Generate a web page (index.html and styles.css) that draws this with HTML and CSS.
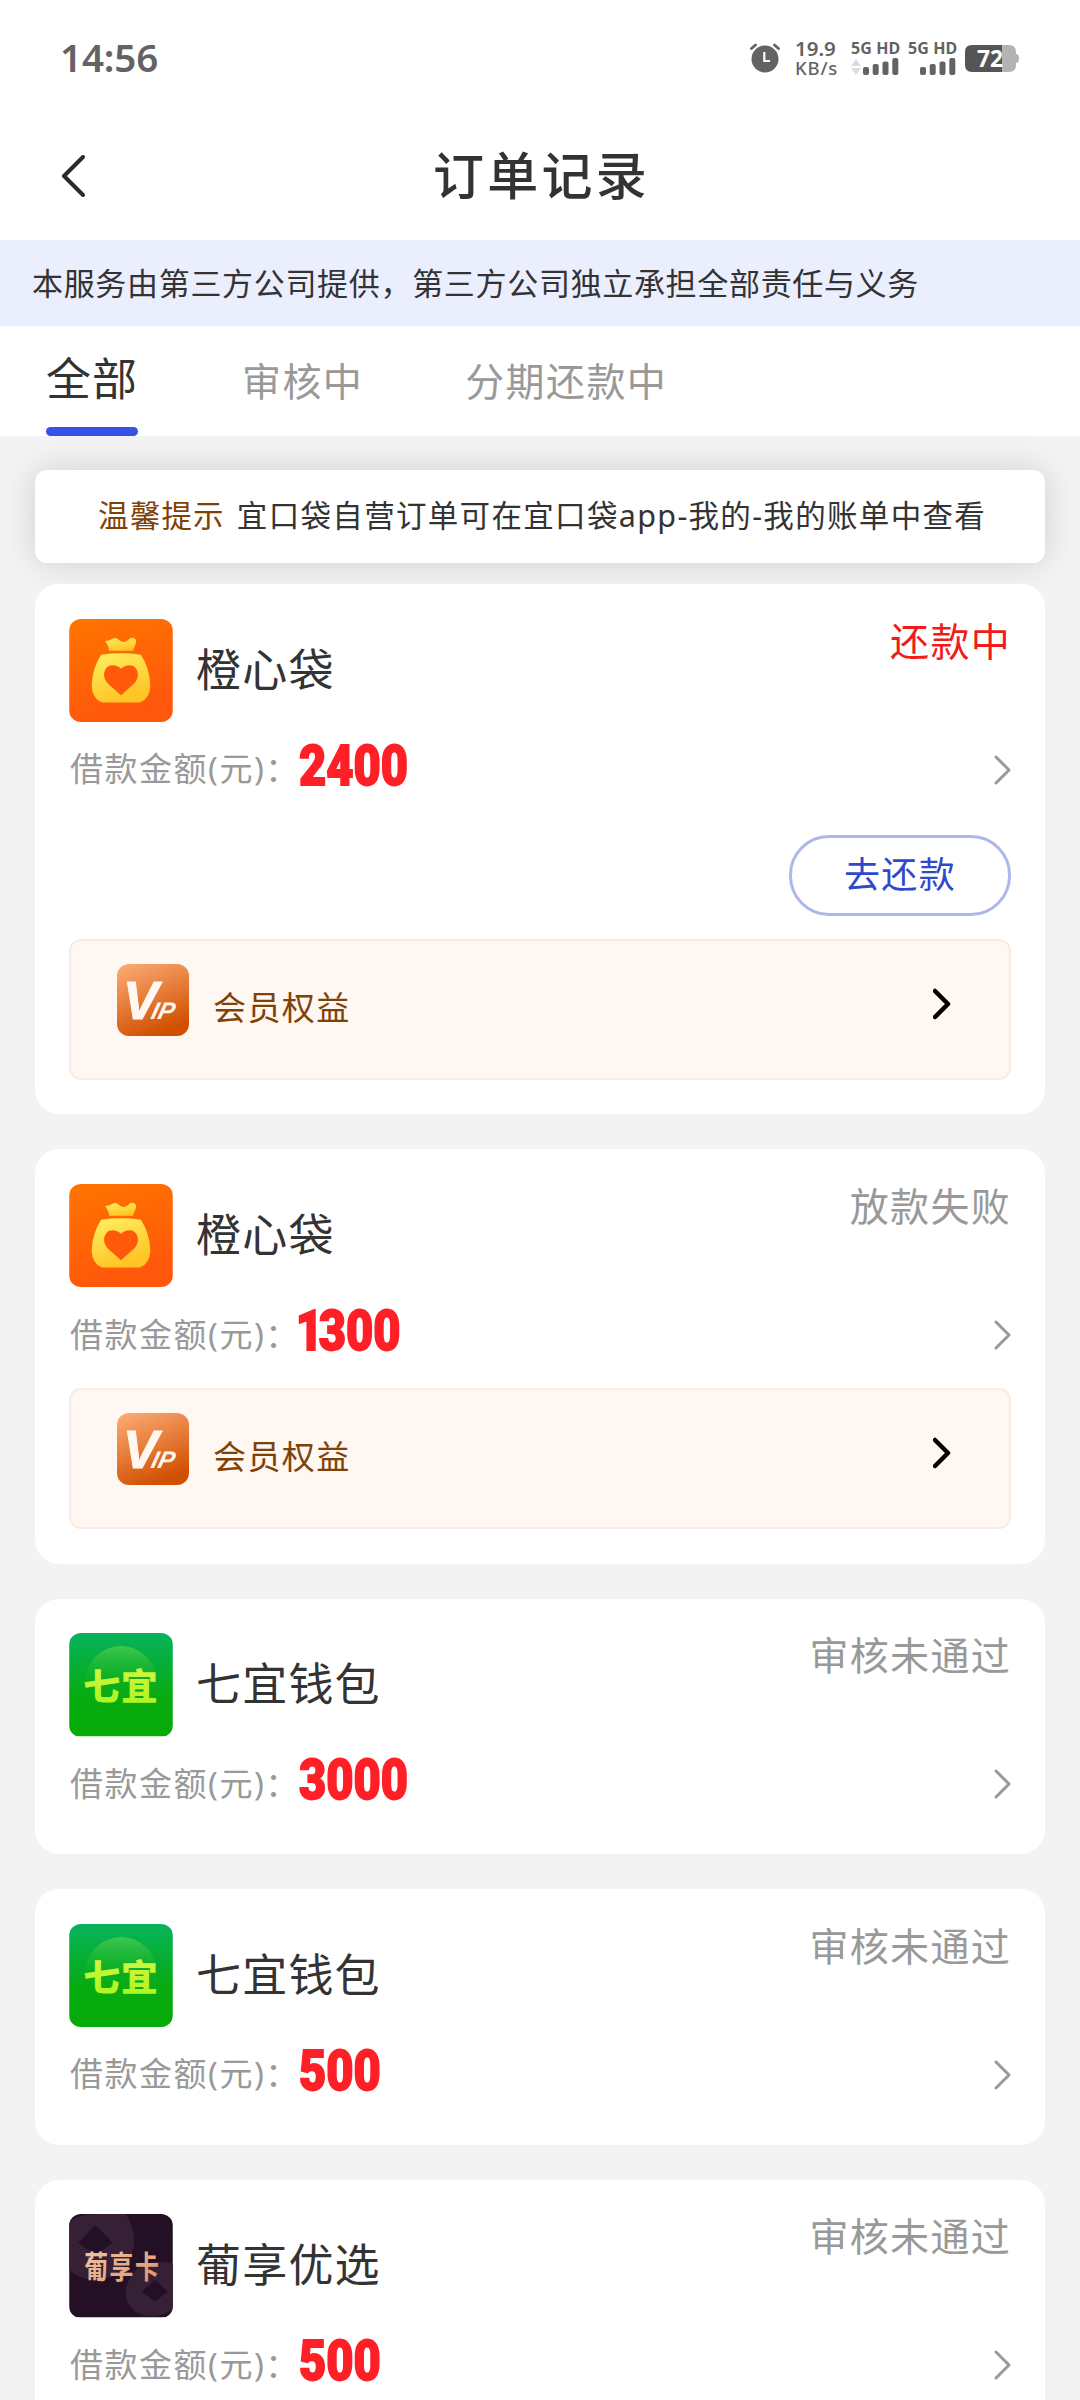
FILE: index.html
```html
<!DOCTYPE html>
<html lang="zh-CN">
<head>
<meta charset="utf-8">
<title>订单记录</title>
<link rel="stylesheet" href="styles.css">
</head>
<body>
<svg class="defs" width="0" height="0" aria-hidden="true">
  <defs>
    <linearGradient id="orange" x1="0" y1="0" x2="0.3" y2="1"><stop offset="0" stop-color="#ff7500"/><stop offset="1" stop-color="#ff570b"/></linearGradient>
    <linearGradient id="bag" x1="0" y1="0" x2="0.4" y2="1"><stop offset="0" stop-color="#fff063"/><stop offset="1" stop-color="#ffc524"/></linearGradient>
    <linearGradient id="green" x1="0" y1="0" x2="0" y2="1"><stop offset="0" stop-color="#06b35c"/><stop offset="0.6" stop-color="#07ab12"/><stop offset="1" stop-color="#07ab05"/></linearGradient>
    <linearGradient id="glow" x1="0" y1="0" x2="0" y2="1"><stop offset="0" stop-color="#3fc750"/><stop offset="0.5" stop-color="#14b020" stop-opacity="0.3"/><stop offset="1" stop-color="#07ab05" stop-opacity="0"/></linearGradient>
    <linearGradient id="lime" x1="0" y1="0" x2="0" y2="1"><stop offset="0" stop-color="#dcf64a"/><stop offset="1" stop-color="#a6f51c"/></linearGradient>
    <linearGradient id="gold" x1="0" y1="0" x2="1" y2="1"><stop offset="0" stop-color="#f3c9a8"/><stop offset="1" stop-color="#dc9468"/></linearGradient>
    <linearGradient id="copper" x1="0.1" y1="0" x2="0.5" y2="1"><stop offset="0" stop-color="#fbaa75"/><stop offset="1" stop-color="#d15000"/></linearGradient>
    <symbol id="logo-bag" viewBox="0 0 104 104">
      <rect width="104" height="104" fill="url(#orange)"/>
      <path d="M36 22 Q40 22 43 20 Q47 18 50 21 Q55 25 59 21 Q62 18 65 19 Q68 21 67 24 L64 32 H40 Q40 27 36 22Z" fill="url(#bag)"/>
      <path d="M32 36 Q52 33 72 36 Q81 50 81.500 67 Q81 80 71 84 H33 Q23 80 22.500 67 Q23 50 32 36Z" fill="url(#bag)"/>
      <path d="M52 76.500 L39 65 Q35 61 35 56 Q35 50 40 47 Q47 45 52 50 Q57 45 64 47 Q69 50 69 56 Q69 61 65 65Z" fill="#ff5a0a"/>
    </symbol>
    <symbol id="logo-qiyi" viewBox="0 0 104 104">
      <rect width="104" height="104" fill="url(#green)"/>
      <circle cx="52" cy="49" r="36" fill="url(#glow)"/>
      <text class="logo-qiyi-text" x="14" y="67" textLength="75" fill="url(#lime)">七宜</text>
    </symbol>
    <symbol id="logo-card" viewBox="0 0 104 104">
      <rect width="104" height="104" fill="#241025"/>
      <path d="M0 8 Q10 0 26 0 H57 Q70 22 62 42 Q50 67 25 67 Q10 65 0 56Z" fill="#352036"/>
      <path d="M104 50 Q82 44 68 55 Q50 75 61 93 Q73 107 94 101 L104 96Z" fill="#352036"/>
      <path d="M26 11 L44 29 L26 41 L9 29Z M86 66 L99 78 L86 88 L73 78Z" fill="#241025"/>
      <text class="logo-card-text" transform="translate(15 64) scale(1 1.3)" textLength="75" fill="url(#gold)">葡享卡</text>
    </symbol>
    <symbol id="vip" viewBox="0 0 72 72">
      <rect width="72" height="72" rx="12" fill="url(#copper)"/>
      <text class="vip-v" x="6" y="55">V</text>
      <text class="vip-ip" transform="translate(33 55) skewX(-14)">IP</text>
    </symbol>
    <symbol id="signal" viewBox="0 0 36 17">
      <g fill="#636363"><rect y="9" width="6" height="8" rx="2"/><rect x="9.7" y="6" width="6" height="11" rx="2"/><rect x="19.5" y="3.5" width="6" height="13.5" rx="2"/><rect x="29.3" width="6" height="17" rx="2"/></g>
    </symbol>
    <symbol id="arrow" viewBox="0 0 18 32"><path d="M2 3 L15 16 L2 29" fill="none" stroke="currentColor" stroke-linecap="round" stroke-linejoin="round"/></symbol>
  </defs>
</svg>

<div class="status-bar">
  <div class="clock">14:56</div>
  <div class="indicators">
    <svg class="alarm" viewBox="0 0 30 30"><circle cx="15" cy="16" r="13.5" fill="#636363"/><path d="M1.5 5.500 L5.500 2 M24.500 2 L28.500 5.500" stroke="#636363" stroke-width="2.800" stroke-linecap="round"/><path d="M14.300 9 V18 H20" fill="none" stroke="#fff" stroke-width="2.200"/></svg>
    <div class="speed"><span>19.9</span><span>KB/s</span></div>
    <div class="sim"><span>5G HD</span><div class="bars"><svg class="updown" viewBox="0 0 10 16"><path d="M5 0 L10 7 H0Z M5 16 L10 9 H0Z" fill="#dcdcdc"/></svg><svg class="signal"><use href="#signal"/></svg></div></div>
    <div class="sim sim-second"><span>5G HD</span><div class="bars"><svg class="signal"><use href="#signal"/></svg></div></div>
    <svg class="battery" viewBox="0 0 54 27"><path d="M37 0 H44 Q51 0 51 7 V9 Q54 9 54 13.500 Q54 18 51 18 V20 Q51 27 44 27 H37Z" fill="#b3b3b3"/><path d="M7 0 H37 V27 H7 Q0 27 0 20 V7 Q0 0 7 0Z" fill="#555"/><text class="battery-text" x="12" y="22" textLength="26" lengthAdjust="spacingAndGlyphs">72</text></svg>
  </div>
</div>

<header class="nav">
  <svg class="back" viewBox="0 0 24 42"><path d="M22 2 L3 21 L22 40" fill="none" stroke="#2b2b2b" stroke-width="4" stroke-linecap="round" stroke-linejoin="round"/></svg>
  <h1>订单记录</h1>
</header>

<div class="notice">本服务由第三方公司提供，第三方公司独立承担全部责任与义务</div>

<nav class="tabs">
  <div class="tab active">全部</div>
  <div class="tab">审核中</div>
  <div class="tab">分期还款中</div>
</nav>

<main>
  <div class="tip"><b>温馨提示</b><span>宜口袋自营订单可在宜口袋app-我的-我的账单中查看</span></div>

  <section class="card">
    <div class="head"><svg class="logo"><use href="#logo-bag"/></svg><h2>橙心袋</h2><span class="state repaying">还款中</span></div>
    <div class="amount"><span class="label">借款金额(元)：</span><span class="value">2400</span><svg class="more"><use href="#arrow"/></svg></div>
    <div class="actions"><button class="repay">去还款</button></div>
    <div class="member"><svg class="vip"><use href="#vip"/></svg><span>会员权益</span><svg class="go"><use href="#arrow"/></svg></div>
  </section>

  <section class="card">
    <div class="head"><svg class="logo"><use href="#logo-bag"/></svg><h2>橙心袋</h2><span class="state">放款失败</span></div>
    <div class="amount"><span class="label">借款金额(元)：</span><span class="value"><span class="one">1</span>300</span><svg class="more"><use href="#arrow"/></svg></div>
    <div class="member"><svg class="vip"><use href="#vip"/></svg><span>会员权益</span><svg class="go"><use href="#arrow"/></svg></div>
  </section>

  <section class="card">
    <div class="head"><svg class="logo"><use href="#logo-qiyi"/></svg><h2>七宜钱包</h2><span class="state">审核未通过</span></div>
    <div class="amount"><span class="label">借款金额(元)：</span><span class="value">3000</span><svg class="more"><use href="#arrow"/></svg></div>
  </section>

  <section class="card">
    <div class="head"><svg class="logo"><use href="#logo-qiyi"/></svg><h2>七宜钱包</h2><span class="state">审核未通过</span></div>
    <div class="amount"><span class="label">借款金额(元)：</span><span class="value">500</span><svg class="more"><use href="#arrow"/></svg></div>
  </section>

  <section class="card">
    <div class="head"><svg class="logo"><use href="#logo-card"/></svg><h2>葡享优选</h2><span class="state">审核未通过</span></div>
    <div class="amount"><span class="label">借款金额(元)：</span><span class="value">500</span><svg class="more"><use href="#arrow"/></svg></div>
  </section>
</main>
</body>
</html>
```
FILE: styles.css
```css
* { box-sizing: border-box; }
body {
  margin: 0;
  width: 1080px;
  height: 2400px;
  overflow: hidden;
  display: flex;
  flex-direction: column;
  background: #f3f3f3;
  color: #333;
  font-family: "Noto Sans", "Noto Sans CJK SC", sans-serif;
}
.defs { position: absolute; }
svg { flex: none; display: block; }
h1, h2 { margin: 0; font-family: "Noto Sans CJK SC", sans-serif; }

.status-bar {
  flex: none;
  height: 116px;
  padding: 0 61px 0 60px;
  display: flex;
  align-items: center;
  justify-content: space-between;
  background: #fff;
  color: #636363;
}
.clock { font-size: 38.5px; font-weight: 600; line-height: 40px; margin-bottom: 2px; letter-spacing: -0.1px; }
.indicators { display: flex; align-items: center; height: 40px; }
.alarm { width: 30px; height: 30px; margin-right: 15px; }
.speed { width: 56px; display: flex; flex-direction: column; font-size: 20.5px; font-weight: 600; }
.speed span { line-height: 20px; }
.speed span + span { font-size: 18.5px; font-weight: 500; letter-spacing: 0.8px; }
.sim { width: 57px; height: 34px; display: flex; flex-direction: column; justify-content: space-between; }
.sim span { font: 700 16px/14px "Noto Sans", sans-serif; white-space: nowrap; letter-spacing: 0.1px; }
.bars { display: flex; align-items: center; width: 48px; justify-content: space-between; }
.sim-second .bars { justify-content: flex-end; }
.updown { width: 10px; height: 16px; }
.signal { width: 36px; height: 17px; }
.battery { width: 54px; height: 27px; overflow: visible; }
.battery-text { font: 700 24px "Noto Sans", sans-serif; fill: #fff; }

.nav {
  flex: none;
  height: 124px;
  padding: 0 61px;
  display: grid;
  grid-template-columns: 100px 1fr 100px;
  align-items: center;
  background: #fff;
}
.back { width: 24px; height: 42px; margin-bottom: 5px; }
.nav h1 { font-size: 51px; font-weight: 500; letter-spacing: 3.3px; text-align: center; margin-bottom: 10px; padding-left: 3px; }

.notice {
  flex: none;
  height: 86px;
  padding-left: 32px;
  background: #ebeefd;
  font-family: "Noto Sans CJK SC", sans-serif;
  font-size: 31px;
  letter-spacing: 0.68px;
  line-height: 83px;
}

.tabs {
  flex: none;
  height: 110px;
  padding-left: 46px;
  display: flex;
  background: #fff;
  font-family: "Noto Sans CJK SC", sans-serif;
}
.tab { font-size: 39px; letter-spacing: 1.4px; line-height: 106px; color: #999; margin-right: 102px; white-space: nowrap; }
.tab.active {
  width: 92px;
  display: flex;
  flex-direction: column;
  justify-content: space-between;
  margin-right: 104px;
  font-size: 45px;
  letter-spacing: 1px;
  line-height: 101px;
  color: #333;
}
.tab.active::after { content: ""; height: 9px; border-radius: 5px; background: #3452e6; }

main { padding: 34px 35px 0; }
.tip {
  height: 93px;
  padding: 0 0 5px 63px;
  display: flex;
  align-items: center;
  border-radius: 12px;
  background: #fff;
  box-shadow: 0 0 34px rgba(0, 0, 0, 0.15);
  font-size: 30.500px;
  letter-spacing: 1.200px;
  white-space: nowrap;
}
.tip b { color: #7f4206; font-weight: 400; margin-right: 12px; }
.tip span { letter-spacing: 1.330px; }

.card {
  margin-bottom: 35px;
  padding: 34.500px 34px;
  border-radius: 24px;
  background: #fff;
}
.tip + .card { margin-top: 21px; }
.head { height: 104px; display: flex; }
.logo { width: 104px; height: 103.500px; border-radius: 12px; }
.logo-qiyi-text { font: 900 37px "Noto Sans CJK SC", sans-serif; }
.logo-card-text { font: 700 24px "Noto Sans CJK SC", sans-serif; }
.head h2 { margin-left: 23px; font-size: 45px; font-weight: 400; letter-spacing: 1.200px; line-height: 98px; }
.state { margin: -1px 0 0 auto; font-family: "Noto Sans CJK SC", sans-serif; font-size: 39px; letter-spacing: 1.300px; line-height: 43px; color: #999; }
.repaying { color: #f01c1c; }
.amount { height: 82.400px; display: flex; align-items: center; }
.label { width: 230px; padding: 7px 0 0 1px; font-size: 33px; letter-spacing: 1.500px; color: #999; white-space: nowrap; }
.value { font: 900 56px/56px Roboto, sans-serif; color: #ff1f26; -webkit-text-stroke: 1.8px #ff1f26; margin-top: 4px; transform: scaleX(0.84); transform-origin: 0 50%; }
.one { margin: 0 -5px 0 -4px; }
.more { width: 18px; height: 32px; margin: 12px -1px 0 auto; color: #999; stroke-width: 3px; }
.actions { display: flex; justify-content: flex-end; padding: 30px 0 23px; }
.repay {
  width: 222px;
  height: 81px;
  padding: 0 0 6px;
  border: 3px solid #adb7e8;
  border-radius: 40px;
  background: #fff;
  color: #2f49cc;
  font-family: "Noto Sans CJK SC", sans-serif;
  font-size: 36px;
  letter-spacing: 1.300px;
}
.member {
  height: 141px;
  padding: 23px 58px 0 46px;
  display: flex;
  border: 2px solid #faece3;
  border-radius: 12px;
  background: #fff7f2;
}
.amount + .member { margin-top: 18px; }
.vip { width: 72px; height: 72px; }
.vip-v { font: italic 700 53px "Liberation Sans", sans-serif; fill: #fff7f0; stroke: #fff7f0; stroke-width: 1px; }
.vip-ip { font: italic 700 24px "Liberation Sans", sans-serif; fill: #fff7f0; }
.member span { margin-left: 24px; font-family: "Noto Sans CJK SC", sans-serif; font-size: 33px; letter-spacing: 1.400px; line-height: 84px; color: #7f4206; }
.go { width: 18px; height: 32px; margin: 24px 0 0 auto; color: #000; stroke-width: 4.500px; }
```
